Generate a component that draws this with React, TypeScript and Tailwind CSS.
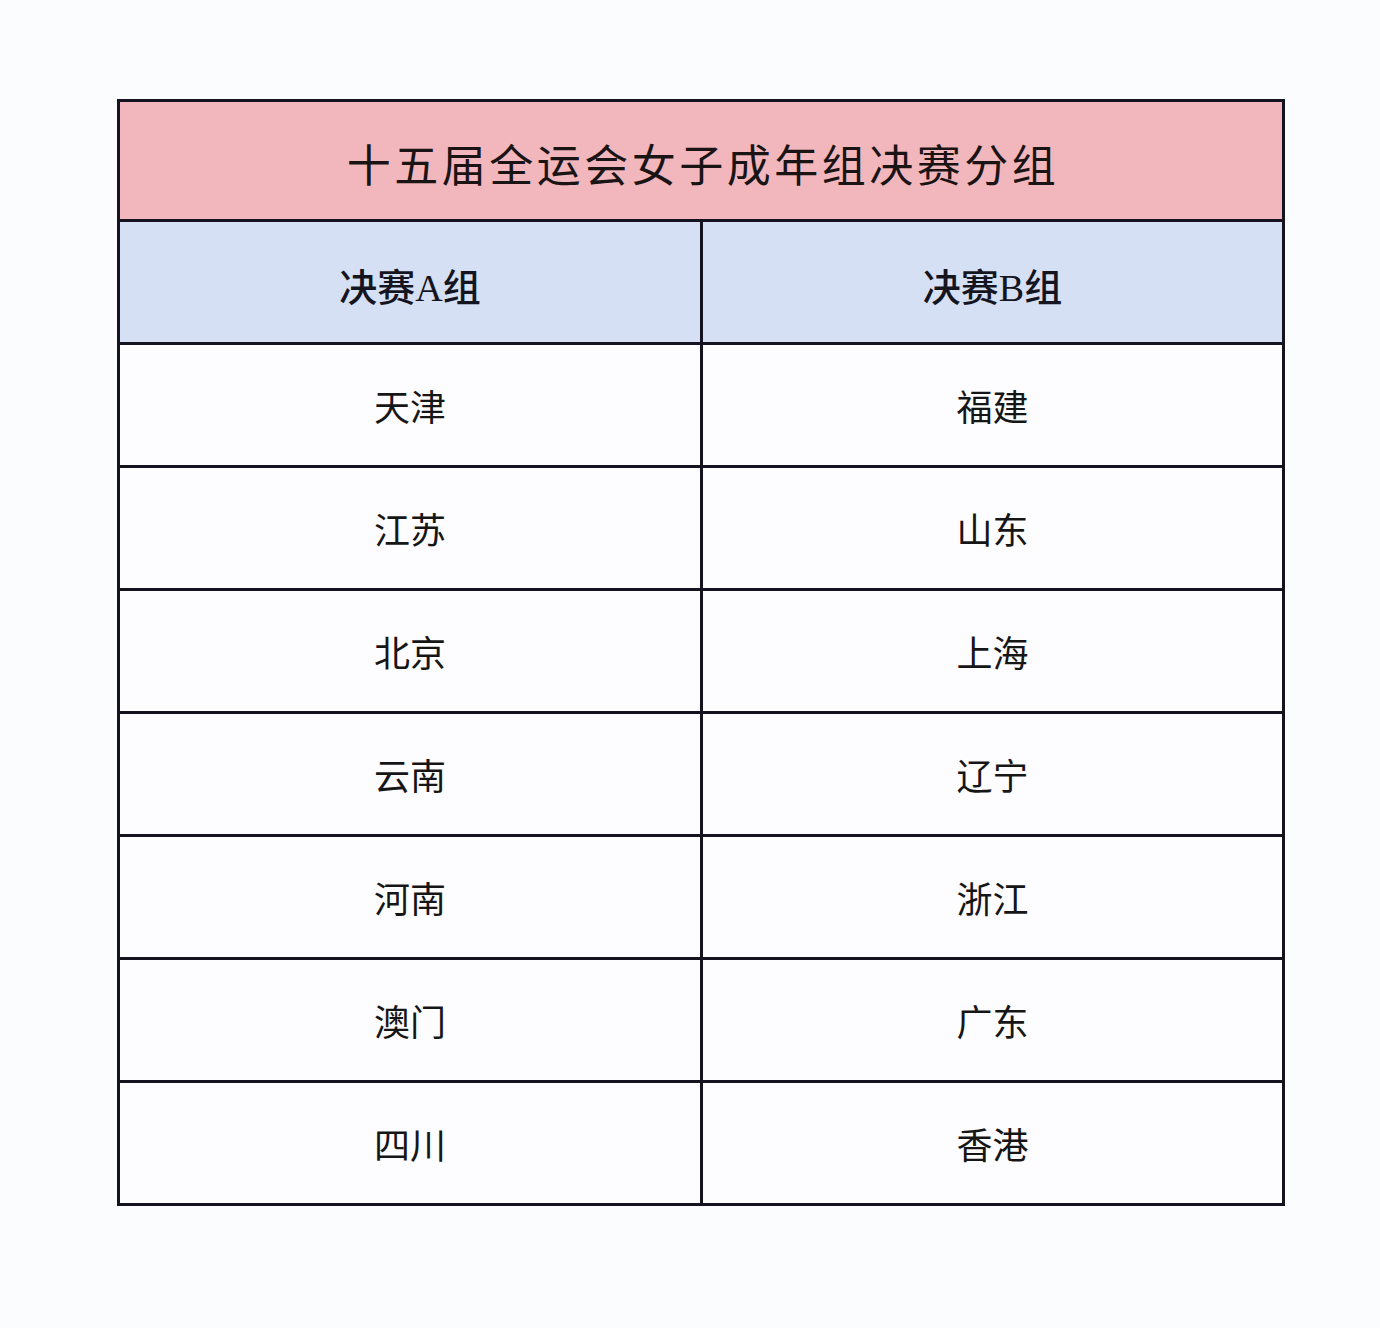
import React from "react";

const rows: [string, string][] = [
  ["天津", "福建"],
  ["江苏", "山东"],
  ["北京", "上海"],
  ["云南", "辽宁"],
  ["河南", "浙江"],
  ["澳门", "广东"],
  ["四川", "香港"],
];

export default function App() {
  return (
    <div className="min-h-[1328px] w-[1380px] bg-[#fbfcfe] pt-[99px] pl-[117px] font-['Noto_Sans_CJK_SC','Noto_Sans',sans-serif]">
      <div className="w-[1168px] border-[3px] border-[#15131f]">
        {/* title */}
        <div className="flex h-[120px] items-center justify-center border-b-[3px] border-[#15131f] bg-[#f2b7bd] pt-1 pl-1 text-[44px] tracking-[3.5px] text-[#1a1414]">
          十五届全运会女子成年组决赛分组
        </div>

        {/* group headers */}
        <div className="grid grid-cols-[583px_1fr] border-b-[3px] border-[#15131f] bg-[#d5e0f4] font-['Liberation_Serif','Noto_Sans_CJK_SC',serif] text-[38px] font-medium text-[#15151f]">
          <div className="flex h-[120px] items-center justify-center border-r-[3px] border-[#15131f] pt-3">
            决赛A组
          </div>
          <div className="flex h-[120px] items-center justify-center pt-3">
            决赛B组
          </div>
        </div>

        {/* teams */}
        {rows.map(([a, b], i) => (
          <div
            key={i}
            className={`grid grid-cols-[583px_1fr] bg-[#fdfdff] text-[36px] text-[#161616] ${
              i < rows.length - 1 ? "border-b-[3px] border-[#15131f]" : ""
            }`}
          >
            <div className="flex h-[120px] items-center justify-center border-r-[3px] border-[#15131f]">
              {a}
            </div>
            <div className="flex h-[120px] items-center justify-center">
              {b}
            </div>
          </div>
        ))}
      </div>
    </div>
  );
}
